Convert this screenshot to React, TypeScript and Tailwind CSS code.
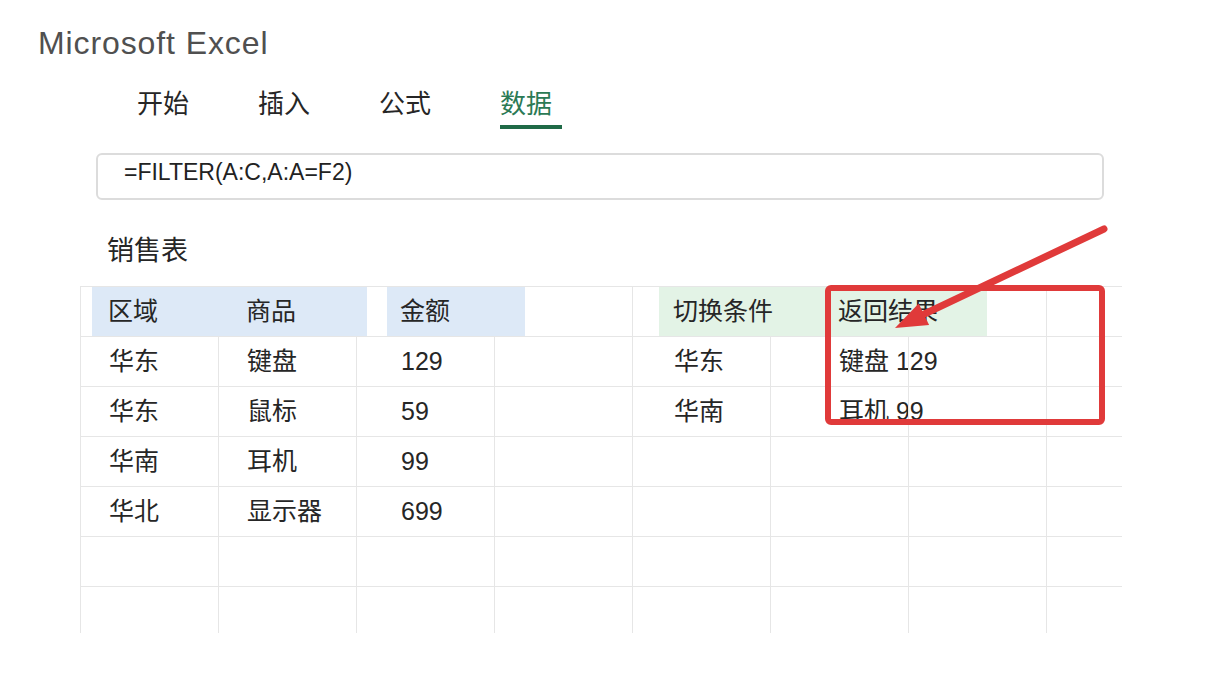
const cjk = "font-['Liberation_Sans','Noto_Sans_CJK_SC',sans-serif]";

const tabs = ['开始', '插入', '公式', '数据'];

const rows: string[][] = [
  ['华东', '键盘', '129', '', '华东', '键盘 129', '', ''],
  ['华东', '鼠标', '59', '', '华南', '耳机 99', '', ''],
  ['华南', '耳机', '99', '', '', '', '', ''],
  ['华北', '显示器', '699', '', '', '', '', ''],
  ['', '', '', '', '', '', '', ''],
  ['', '', '', '', '', '', '', ''],
];

// text indent per column, measured from the left grid line
const pads = ['pl-[28px]', 'pl-[28px]', 'pl-[44px]', 'pl-[28px]', 'pl-[41px]', 'pl-[68px]', 'pl-[28px]', 'pl-[28px]'];

function Cell({ text, idx, h }: { text: string; idx: number; h: string }) {
  const w = idx === 7 ? 'w-[76px]' : 'w-[138px]';
  return (
    <div
      className={`${w} ${h} ${pads[idx]} shrink-0 border-l border-[#e6e6e6] flex items-center whitespace-nowrap overflow-visible text-[25px] text-[#262626]`}
    >
      {text}
    </div>
  );
}

export default function App() {
  return (
    <div className={`relative w-[1207px] h-[690px] overflow-hidden bg-white ${cjk}`}>
      {/* title */}
      <div className="pl-[38px] pt-[25px] h-[61px] text-[32px] leading-[36px] tracking-[0.9px] text-[#505050] font-['Liberation_Sans',sans-serif]">
        Microsoft Excel
      </div>

      {/* ribbon tabs */}
      <div className="flex gap-[59px] pl-[137px] pt-[25px]">
        {tabs.map((t) => {
          const active = t === '数据';
          return (
            <div key={t} className="flex flex-col w-[62px]">
              <span className={`h-[36px] leading-[36px] text-[26px] ${active ? 'text-[#2b7a55]' : 'text-[#262626]'}`}>
                {t}
              </span>
              <span className={`mt-[3px] h-[4px] w-[62px] ${active ? 'bg-[#1f6a47]' : 'bg-transparent'}`} />
            </div>
          );
        })}
      </div>

      {/* formula bar */}
      <div className="ml-[96px] mt-[24px] w-[1008px] h-[47px] rounded-[6px] border-2 border-[#dcdcdc] flex items-center pl-[26px] pb-[8px] text-[23px] text-[#222] font-['Liberation_Sans',sans-serif]">
        =FILTER(A:C,A:A=F2)
      </div>

      {/* sheet name */}
      <div className="ml-[107px] mt-[37px] h-[28px] leading-[28px] text-[27px] text-[#262626]">销售表</div>

      {/* grid */}
      <div className="ml-[80px] mt-[21px] w-[1042px] border-t border-[#e6e6e6]">
        {/* header row */}
        <div className="flex h-[49px] text-[25px] text-[#262626]">
          <div className="w-[12px] shrink-0 border-l border-[#e6e6e6]" />
          <div className="w-[275px] shrink-0 bg-[#dde9f7] flex items-center">
            <span className="pl-[16px] w-[154px]">区域</span>
            <span>商品</span>
          </div>
          <div className="w-[20px] shrink-0" />
          <div className="w-[138px] shrink-0 bg-[#dde9f7] flex items-center pl-[13px]">金额</div>
          <div className="w-[107px] shrink-0" />
          <div className="w-[27px] shrink-0 border-l border-[#e6e6e6]" />
          <div className="w-[328px] shrink-0 bg-[#e3f3e6] flex items-center">
            <span className="pl-[14px] w-[179px]">切换条件</span>
            <span>返回结果</span>
          </div>
          <div className="w-[59px] shrink-0" />
          <div className="w-[76px] shrink-0 border-l border-[#e6e6e6]" />
        </div>

        {rows.map((r, i) => (
          <div key={i} className="flex border-t border-[#e6e6e6]">
            {r.map((c, j) => (
              <Cell key={j} text={c} idx={j} h={i === rows.length - 1 ? 'h-[46px]' : 'h-[49px]'} />
            ))}
          </div>
        ))}
      </div>

      {/* annotation: red box and arrow */}
      <svg className="absolute left-0 top-0 pointer-events-none" width="1207" height="690" viewBox="0 0 1207 690">
        <rect x="828" y="288" width="274" height="134" rx="3" fill="none" stroke="#e03a3a" strokeWidth="6" />
        <line x1="1104" y1="229" x2="918" y2="317" stroke="#e03a3a" strokeWidth="7" strokeLinecap="round" />
        <polygon points="895,328 918.7,303.4 929.1,325" fill="#e03a3a" />
      </svg>
    </div>
  );
}
